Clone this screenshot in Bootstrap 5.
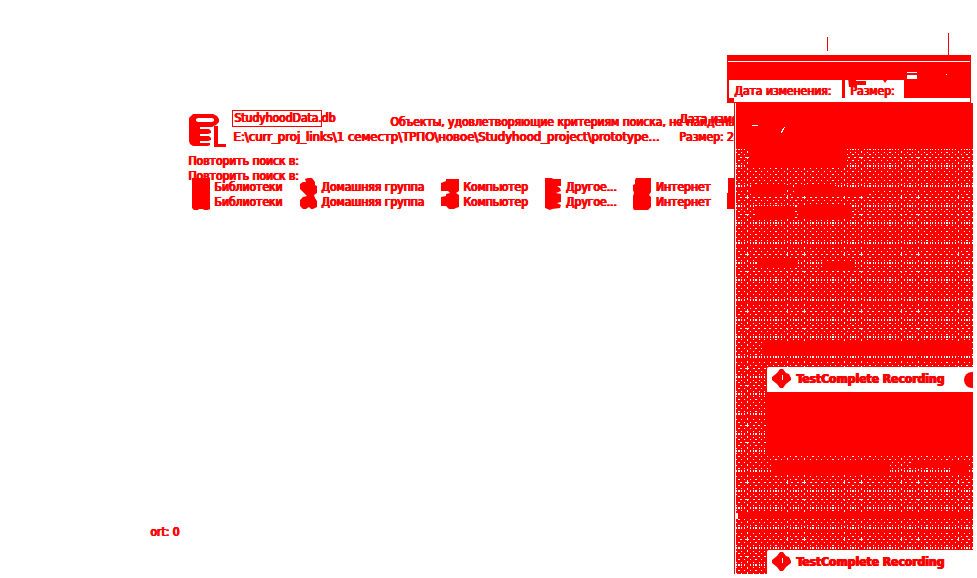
<!DOCTYPE html>
<html lang="ru">
<head>
<meta charset="utf-8">
<meta name="viewport" content="width=device-width, initial-scale=1">
<title>Studyhood search</title>
<link href="https://cdn.jsdelivr.net/npm/bootstrap@5.3.0/dist/css/bootstrap.min.css" rel="stylesheet">
<style>
:root{--ink:#f00}
body{background:#fff;color:var(--ink);font:12px/15px "DejaVu Sans Condensed","DejaVu Sans",sans-serif;text-shadow:1px 0 0 var(--ink),1px 0 0 var(--ink),0 0 0 var(--ink)}
a,a:hover{color:inherit;text-decoration:none}
svg{fill:var(--ink);display:block;flex:none}
.results{padding:110px 0 38px 188px;overflow:hidden;position:relative;min-width:0}
.file-name{border:1px solid var(--ink);width:90px;height:17px;padding-left:1px;line-height:15px;white-space:nowrap}
.path-line{padding:1px 0 0 1px;line-height:18px;width:447px;font-size:13px}
.meta-info{line-height:18px}
.empty-note{position:absolute;left:390px;top:115px}
.places{gap:17px;padding-left:4px;margin-top:-6px}
.place{gap:3px}
.place span{padding-top:2px}
.counter{margin-left:-38px}
.side{width:242px;padding:33px 4px 4px 0}
.ticks{height:22px;padding:0 24px 0 92px}
.ticks i{width:1px;background:var(--ink)}
.columns-box{margin:0 2px 0 -8px;border:1px solid var(--ink);height:48px}
.strip-a{height:5px;background:var(--ink)}
.strip-b{height:18px;margin-top:1px;background:var(--ink)}
.cols{height:18px;border-left:1px solid var(--ink)}
.col-date{width:113px;padding:4px 0 0 5px}
.col-size{border-left:3px solid var(--ink);width:62px;padding:4px 0 0 5px}
.col-rest{background:var(--ink)}
.corner{width:6px;height:5px;background:var(--ink)}
.marks{position:absolute;left:112px;top:14px}
.panel{border-left:1px solid var(--ink);margin-left:-1px;padding-left:32px;overflow:hidden}
.mesh{position:absolute;left:1px;top:0}
.notice{background:#fff;height:25px;position:relative;padding-left:5px;gap:4px;font-weight:700;border-top-left-radius:2px}
.notice-1{margin-top:264px}
.notice-2{margin-top:158px}
.close-dot{position:absolute;right:-9px;top:5px;width:18px;height:16px;border:0;padding:0;border-radius:8px;background:var(--ink)}
</style>
<script src="https://cdn.jsdelivr.net/npm/bootstrap@5.3.0/dist/js/bootstrap.bundle.min.js"></script>
</head>
<body class="vh-100 d-flex overflow-hidden">
<main class="results d-flex flex-column flex-grow-1">
  <div class="d-flex text-nowrap mb-1">
    <svg class="mt-1 me-1" width="40" height="36" viewBox="0 0 40 36"><path d="M5 0h20l4 2 2 3v3l-3 3-4 2H12v2h9l2 2v2l-3 1h-8v2h9l2 2v2l-3 1h-8v2h10v2l-2 1H5l-3-2-1-3V4zM10 4 8 5v2l2 1h14l2-1V5l-2-1zM26 12h4v18h8v3H26z" fill-rule="evenodd"/></svg>
    <div><a href="#" class="file-name d-block">StudyhoodData.db</a><div class="path-line">E:\curr_proj_links\1 семестр\ТРПО\новое\Studyhood_project\prototype...</div></div>
    <div class="meta-info"><div>Дата изменения:</div><div>Размер: 240 КБ</div></div>
  </div>
  <div class="empty-note text-nowrap">Объекты, удовлетворяющие критериям поиска, не найдены.</div>
  <div>Повторить поиск в:</div>
  <div>Повторить поиск в:</div>
  <nav class="places d-flex text-nowrap">
    <a href="#" class="place d-flex"><svg width="19" height="33" viewBox="0 0 19 33"><path d="M0 0h18v31l-2 1h-4l-1-1H7l-1 1H2l-2-2z"/></svg><span>Библиотеки<br>Библиотеки</span></a>
    <a href="#" class="place d-flex"><svg width="19" height="33" viewBox="0 0 19 33"><path d="M6 1 9 0h4l3 4v3l2 1v7l-3 2 1 3 2 3v6l-4 2h-2l-2-2-3 2H4l-3-3v-6l3-3 4-1-3-3-4-4V6l3-2h3z"/></svg><span>Домашняя группа<br>Домашняя группа</span></a>
    <a href="#" class="place d-flex"><svg width="19" height="33" viewBox="0 0 19 33"><path d="M5 1h13v12l-3 2 3 2v12l-3 1-2 1H8l-3-3H0v-9l5-1v-2l4-1-2-2H0V5l5-2z"/></svg><span>Компьютер<br>Компьютер</span></a>
    <a href="#" class="place d-flex"><svg width="18" height="33" viewBox="0 0 18 33"><path d="M0 0h7l1 1h8v7h-4l3 2 1 3-5 2 5 1v8l-4 1 4 2-1 3-8 1-2 1-5-2z"/></svg><span>Другое...<br>Другое...</span></a>
    <a href="#" class="place d-flex"><svg width="19" height="33" viewBox="0 0 19 33"><path d="M3 0h15v14l-2 3 2 2v10l-3 3H1l-1-2V18l1-3-1-3V7l2-1V2z"/></svg><span>Интернет<br>Интернет</span></a>
    <svg width="19" height="33"><path d="M1 0h18v31H0V15h1z"/></svg>
  </nav>
  <div class="counter mt-auto">ort: 0</div>
</main>
<aside class="side d-flex flex-column flex-shrink-0 position-relative">
  <div class="ticks d-flex justify-content-between"><i class="mt-1 mb-1"></i><i></i></div>
  <div class="columns-box position-relative flex-shrink-0">
    <div class="strip-a"></div><div class="strip-b"></div>
    <div class="cols d-flex text-nowrap"><div class="col-date">Дата изменения:</div><div class="col-size">Размер:</div><div class="col-rest flex-grow-1"></div></div>
    <div class="corner"></div>
    <svg class="marks" width="130" height="18"><path d="M8 8h8v3h10v4h-9v2h-8zM43 10h4l-2 3z"/><path fill="#fff" d="M67 2h10v1H67zM67 5h10v4H67zM106 4h1v1h-1z"/></svg>
  </div>
  <div class="panel position-relative flex-grow-1">
    <svg class="mesh" width="100%" height="100%" shape-rendering="crispEdges">
      <defs><pattern id="mesh" x="11" y="37" width="57" height="57" patternUnits="userSpaceOnUse">
        <g fill="none" stroke="#fff">
          <path stroke-dasharray="2 4 2 3" d="M0 .5h57M0 17.5h57M.5 0v57M40.5 0v57"/>
          <path stroke-width="2" stroke-dasharray="1 4 2 4 1 5 1 5 1 4 1 5 1 5 1 4 2 4 1 99" d="M3 9h54M3 26h54M3 46h54"/>
          <path stroke-width="2" stroke-dasharray="1 5 1 4 1 5 1 4 2 4 1 11 1 4 1 99" d="M6 9h51M6 26h51M6 46h51"/>
          <path stroke-dasharray="1 4 2 4 1 5 1 5 1 4 1 5 1 5 1 4 2 4 1 99" d="M3 3.5h54M3 14.5h54M3 20.5h54M3 31.5h54M3 37.5h54M3 43.5h54M3 54.5h54"/>
          <path stroke-dasharray="1 5 1 4 1 5 1 4 2 4 1 11 1 4 1 99" d="M6 6.5h51M6 12.5h51M6 23.5h51M6 28.5h51M6 34.5h51M6 40.5h51M6 51.5h51"/>
        </g></pattern></defs>
      <rect width="100%" height="100%"/>
      <rect y="46" width="100%" height="100%" fill="url(#mesh)"/>
      <path d="M13 46h96v19H13zM15 82h42v5h-9v6H15zM58 82h40l5 4h30v7H58zM19 103h39v13H19zM62 102h54v14H62zM22 157h39v8H22zM88 158h31v8H88zM26 238h209v15H26zM31 289h210v64H31zM36 357h118v13H36zM176 357h57v13h-18v-5h-39zM0 409h240v7H0z"/>
      <path fill="#fff" d="M16 22h6v1h-6zM46 27l2-3h1l-2 4-1 2h-1v-2zM0 410h2v6H0z"/>
    </svg>
    <div class="notice notice-1 d-flex align-items-center"><svg width="20" height="20" viewBox="0 0 20 20"><path d="m8 0 3 0 3 4 3 1 2 4v2l-5 4-3 4H8l-3-4-5-4V8l5-4zm2 6v5h1V6z" fill-rule="evenodd"/></svg><span>TestComplete Recording</span><button class="close-dot" aria-label="Закрыть"></button></div>
    <div class="notice notice-2 d-flex align-items-center"><svg width="20" height="20" viewBox="0 0 20 20"><path d="m8 0 3 0 3 4 3 1 2 4v2l-5 4-3 4H8l-3-4-5-4V8l5-4zm2 6v5h1V6z" fill-rule="evenodd"/></svg><span>TestComplete Recording</span></div>
  </div>
</aside>
</body>
</html>
